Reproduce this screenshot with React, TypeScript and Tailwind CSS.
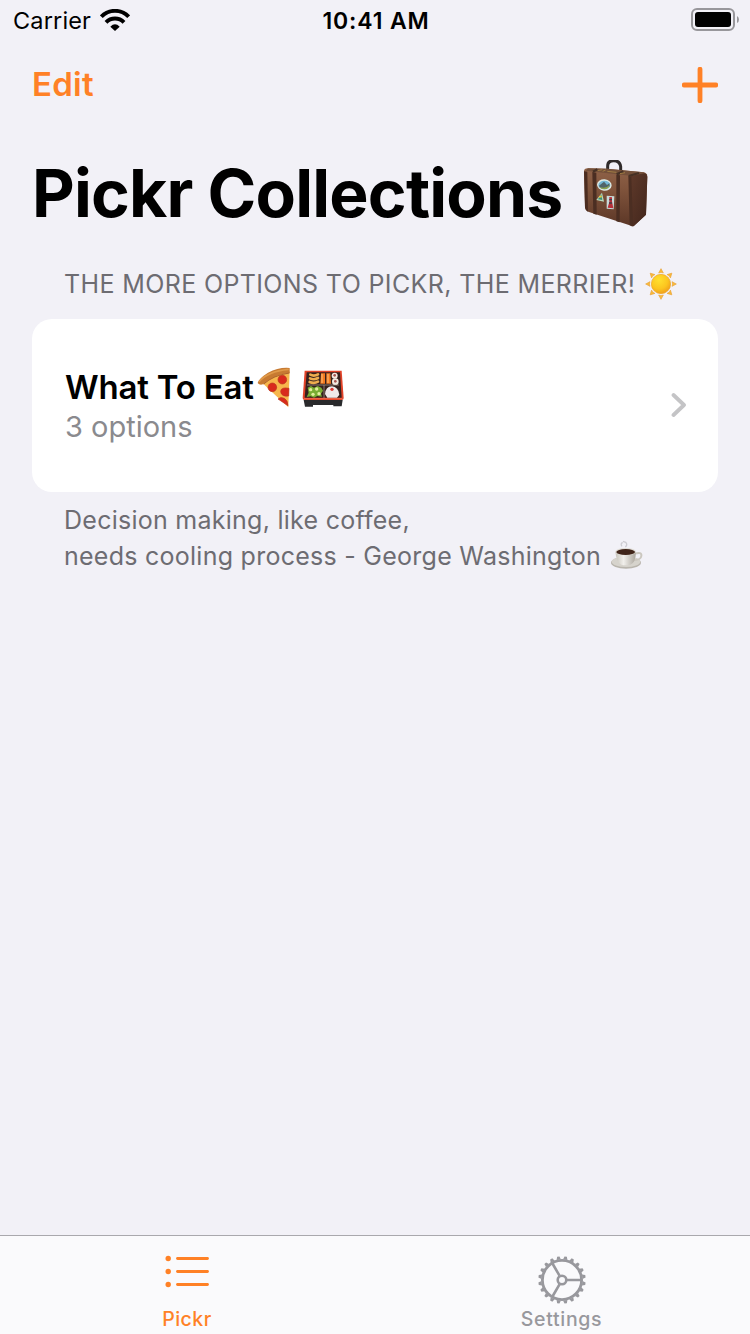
import React from "react";

function WifiIcon() {
  return (
    <svg className="ml-[9px] h-[22px] w-[30px] shrink-0" viewBox="0 0 90 66" fill="none">
      <path d="M4 23A57 57 0 0 1 86 23" stroke="#000" strokeWidth="12" />
      <path d="M18 40A38 38 0 0 1 72 40" stroke="#000" strokeWidth="12" />
      <path d="M31 53Q45 39 59 53L45 66Z" fill="#000" />
    </svg>
  );
}

function BatteryIcon() {
  return (
    <svg className="h-[24px] w-[48px]" viewBox="0 0 48 24" fill="none">
      <rect x="1" y="1" width="42" height="21" rx="5" stroke="#98979b" strokeWidth="2" />
      <rect x="4" y="4" width="36" height="15" rx="3" fill="#000" />
      <path d="M46 8Q48 9 48 11.5T46 15Z" fill="#98979b" />
    </svg>
  );
}

function SuitcaseEmoji() {
  return (
    <svg className="h-[68px] w-[66px] shrink-0" viewBox="40 42 198 204">
      <defs>
        <linearGradient id="leather" x1="0" y1="0" x2="0" y2="1">
          <stop offset="0" stopColor="#8f6248" />
          <stop offset="0.35" stopColor="#80543c" />
          <stop offset="1" stopColor="#5b3626" />
        </linearGradient>
        <linearGradient id="leatherSide" x1="0" y1="0" x2="1" y2="1">
          <stop offset="0" stopColor="#5e392a" />
          <stop offset="1" stopColor="#42261c" />
        </linearGradient>
      </defs>
      <path d="M114 72V60Q114 44 132 44Q151 44 153 62V80" fill="none" stroke="#302b2b" strokeWidth="9" />
      <path d="M43 76Q43 67 54 67L112 68L222 79Q233 81 233 92L229 206L192 240Q187 243 180 238L58 198Q46 194 46 184Z" fill="url(#leather)" />
      <path d="M55 67L112 68L222 79L233 86L182 89L48 74Z" fill="#74503a" />
      <path d="M182 90L225 82Q233 84 233 92L229 206L192 241Q185 240 185 231Z" fill="url(#leatherSide)" />
      <path d="M43 76L53 77L55 197Q47 193 46 184Z" fill="#4b2c20" />
      <path d="M68 78L80 80L81 206L71 203ZM140 86L151 88L150 229L140 226ZM176 90L185 92L190 240L180 238Z" fill="#4b2e22" />
      <path d="M70 77L83 70M141 85L161 76M177 90L208 81" stroke="#463125" strokeWidth="7" />
      <path d="M84 74L98 71M151 83L166 80M99 76L108 72M113 76L140 79" stroke="#a07c43" strokeWidth="3" />
      <ellipse cx="104" cy="117" rx="22" ry="17" fill="#dfeae5" transform="rotate(5 104 117)" />
      <ellipse cx="104" cy="117" rx="18" ry="13" fill="#76b8d6" />
      <path d="M88 119L103 107L112 117L119 112L120 121Q106 133 90 124Z" fill="#50646a" />
      <path d="M90 123Q107 130 120 117Q118 129 104 130Q94 130 90 123Z" fill="#8fa44f" />
      <path d="M97 140L103 167L80 162Z" fill="#b9dcc0" />
      <path d="M95 145L98 162L85 160Z" fill="#3c8d75" />
      <path d="M88 153L96 151" stroke="#e8c63f" strokeWidth="5" />
      <path d="M111 149L134 151L132 190L111 188Z" fill="#c8dbda" />
      <path d="M119 153L127 154L127 166L131 187L114 185L119 168Z" fill="#b8303a" />
      <path d="M119 161H127M118 171H127" stroke="#453b44" strokeWidth="4" />
    </svg>
  );
}

function SunEmoji() {
  return (
    <svg className="h-[32px] w-[32px] shrink-0" viewBox="-48 -48 96 96">
      <defs>
        <radialGradient id="sunDisc" cx="0.4" cy="0.3" r="0.75">
          <stop offset="0" stopColor="#ffe02f" />
          <stop offset="0.6" stopColor="#fcc51f" />
          <stop offset="1" stopColor="#ee9a1a" />
        </radialGradient>
      </defs>
      {[0, 45, 90, 135, 180, 225, 270, 315].map((angle) => (
        <path key={angle} d="M0 -46L7 -33Q0 -37 -7 -33Z" transform={`rotate(${angle})`} fill="#fbbb35" stroke="#e9a33b" strokeWidth="2" />
      ))}
      <circle r="29" fill="url(#sunDisc)" stroke="#eda522" strokeWidth="2" />
    </svg>
  );
}

function PizzaEmoji() {
  return (
    <svg className="h-[42px] w-[34px] shrink-0" viewBox="33 36 102 126">
      <path d="M49 84Q75 57 131 49L127 157Z" fill="#f7b64c" />
      <path d="M35 84Q39 70 66 53Q99 36 131 39V54Q86 57 51 88Q40 91 35 84Z" fill="#c77a32" />
      <path d="M39 80Q65 49 128 43" stroke="#e09a49" strokeWidth="5" fill="none" />
      <path d="M53 87Q82 61 130 54" stroke="#a9602c" strokeWidth="3" fill="none" />
      <g fill="#d92a1d" stroke="#b9391e" strokeWidth="2">
        <circle cx="109" cy="74" r="13" />
        <circle cx="79" cy="97" r="13" />
        <path d="M129 100Q104 95 104 110Q106 126 128 123Z" />
        <path d="M96 132Q103 124 115 130Q126 137 126 152Z" />
      </g>
    </svg>
  );
}

function BentoEmoji() {
  return (
    <svg className="h-[38px] w-[42px] shrink-0" viewBox="169 46 126 114">
      <path d="M174 136H291L288 155H263V151H202V156H178Z" fill="#292a2c" />
      <path d="M177 48H288L294 130Q294 136 288 136H177Q171 136 171 130Z" fill="#e24329" />
      <path d="M183 53H283L288 129H177Z" fill="#35211e" />
      <g stroke="#edac4e" strokeWidth="8" strokeLinecap="round" fill="none">
        <path d="M194 60Q205 66 217 59M193 71Q205 77 217 70M192 82Q205 88 217 81" />
      </g>
      <path d="M226 56H238V87H224ZM242 56H254L256 87H242Z" fill="#f47a20" />
      <path d="M229 58V85M247 58V85" stroke="#ffc078" strokeWidth="3" />
      <g fill="#f4e9df">
        <circle cx="267" cy="63" r="9" />
        <circle cx="269" cy="81" r="10" />
      </g>
      <circle cx="267" cy="62" r="4" fill="#a65450" />
      <circle cx="269" cy="80" r="4" fill="#a65450" />
      <path d="M184 91H280M235 91V130" stroke="#b5a598" strokeWidth="2" />
      <path d="M186 99L196 94L205 99L216 94L227 99L232 108L226 117L229 126L215 124L205 129L195 125L183 127L189 114Z" fill="#79ad32" />
      <g fill="#e2ee9c">
        <circle cx="195" cy="105" r="5" />
        <circle cx="213" cy="103" r="5" />
        <circle cx="202" cy="119" r="5" />
        <circle cx="220" cy="117" r="5" />
      </g>
      <path d="M238 118Q240 96 259 95Q278 97 281 120L274 129H245Z" fill="#f0e9e9" />
      <circle cx="259" cy="104" r="5" fill="#df3932" />
      <path d="M175 132H290" stroke="#f0694a" strokeWidth="3" />
    </svg>
  );
}

function CoffeeEmoji() {
  return (
    <svg className="h-[30px] w-[33px] shrink-0" viewBox="34 28 99 90">
      <defs>
        <linearGradient id="cup" x1="0" y1="0" x2="1" y2="0">
          <stop offset="0" stopColor="#c7c4bb" />
          <stop offset="0.4" stopColor="#f1efeb" />
          <stop offset="1" stopColor="#aaa59c" />
        </linearGradient>
      </defs>
      <path d="M70 47Q64 40 72 35M80 49Q88 42 81 35L73 32" stroke="#cdccd2" strokeWidth="4" fill="none" />
      <ellipse cx="82" cy="96" rx="45" ry="18" fill="#b9b5ad" />
      <ellipse cx="82" cy="93" rx="43" ry="16" fill="#d6d3cc" />
      <path d="M108 69Q130 62 128 76Q127 88 103 89" stroke="#cbc7bf" strokeWidth="6" fill="none" />
      <path d="M50 63H112Q111 96 95 102Q82 106 68 102Q53 94 50 63Z" fill="url(#cup)" />
      <ellipse cx="81" cy="63" rx="31" ry="11" fill="#e0ddd7" />
      <ellipse cx="81" cy="64" rx="28" ry="9" fill="#402419" />
    </svg>
  );
}

function ListIcon() {
  return (
    <svg className="h-[34px] w-[46px]" viewBox="0 0 46 34">
      {[4.5, 17.5, 30.5].map((y) => (
        <g key={y}>
          <circle cx="4.2" cy={y} r="2.7" fill="#ff8126" />
          <path d={`M13.5 ${y}H43.5`} stroke="#ff8126" strokeWidth="2.8" strokeLinecap="round" />
        </g>
      ))}
    </svg>
  );
}

function GearIcon() {
  const teeth = Array.from({ length: 20 }, (_, i) => i * 18 + 9);
  return (
    <svg className="h-[48px] w-[48px]" viewBox="-24 -24 48 48" fill="none" stroke="#98989d">
      {teeth.map((angle) => (
        <path key={angle} d="M-2.2 -20.5L-1.2 -23.7H1.2L2.2 -20.5Z" transform={`rotate(${angle})`} fill="#98989d" stroke="none" />
      ))}
      <circle r="19.6" strokeWidth="2.8" />
      <circle r="4.3" strokeWidth="2.6" />
      <path d="M5 0H19M-2.5 -4.3L-9.8 -17M-2.5 4.3L-9.8 17" strokeWidth="2.6" />
    </svg>
  );
}

export default function App() {
  return (
    <div className="flex h-[1334px] w-[750px] flex-col overflow-hidden bg-[#f2f1f7] font-['Inter',sans-serif] whitespace-nowrap text-black">
      <header className="grid h-[40px] grid-cols-[1fr_auto_1fr] items-center pr-[11px] pl-[13px]">
        <div className="flex items-center">
          <span className="pt-[2px] text-[23.5px] tracking-[0.15px]">Carrier</span>
          <WifiIcon />
        </div>
        <span className="pt-[2px] text-[23px] font-semibold tracking-[0.85px]">10:41 AM</span>
        <div className="flex justify-end">
          <BatteryIcon />
        </div>
      </header>

      <nav className="flex h-[88px] items-center justify-between px-[32px] pt-[2px] text-[#ff8126]">
        <button className="text-[33px] font-semibold tracking-[0.25px]">Edit</button>
        <button aria-label="Add collection">
          <svg className="h-[36px] w-[36px]" viewBox="0 0 36 36">
            <path d="M18 2.2V33.8M2.2 18H33.8" stroke="#ff8126" strokeWidth="4.8" strokeLinecap="round" />
          </svg>
        </button>
      </nav>

      <div className="flex h-[131px] items-center gap-[21px] pl-[32px]">
        <h1 className="text-[66px] font-bold tracking-[-0.8px]">Pickr Collections</h1>
        <SuitcaseEmoji />
      </div>

      <main className="flex flex-1 flex-col px-[32px]">
        <div className="flex h-[51px] items-center gap-[9.5px] pl-[32px] text-[25px] text-[#6d6c72]">
          <h2 className="tracking-[0.37px]">THE MORE OPTIONS TO PICKR, THE MERRIER!</h2>
          <span className="pb-[1px]"><SunEmoji /></span>
        </div>
        <section className="mt-[9px] flex h-[173px] w-[686px] items-center justify-between rounded-[20px] bg-white pr-[31px] pl-[33px]">
          <div className="pt-[2px]">
            <div className="flex h-[40px] items-center pt-[2px]">
              <span className="w-[191.5px] text-[33px] font-semibold tracking-[-0.2px]">What To Eat</span>
              <span className="pt-[1px]"><PizzaEmoji /></span>
              <span className="w-[11px]" />
              <span className="pt-[3px]"><BentoEmoji /></span>
            </div>
            <div className="flex h-[40px] items-center text-[29px] text-[#8a8a8e]">3 options</div>
          </div>
          <svg className="mb-[2px] h-[26px] w-[16px]" viewBox="0 0 16 26">
            <path d="M2.5 3L13 13L2.5 23" fill="none" stroke="#c4c4c6" strokeWidth="3.8" strokeLinecap="round" strokeLinejoin="round" />
          </svg>
        </section>
        <div className="mt-[11px] pl-[32px] text-[25px] tracking-[0.26px] text-[#6d6c72]">
          <p className="flex h-[36px] items-center">Decision making, like coffee,</p>
          <p className="flex h-[36px] items-center gap-[9px]">
            <span>needs cooling process - George Washington</span>
            <span className="pb-[4px]"><CoffeeEmoji /></span>
          </p>
        </div>
      </main>

      <footer className="grid h-[99px] grid-cols-2 border-t border-[#a9a8ad] bg-[#fafafc] text-[19.5px] font-medium">
        <button className="flex flex-col items-center pr-[1px] text-[#ff8126]">
          <span className="flex h-[71px] items-center pb-[1px]"><ListIcon /></span>
          <span className="leading-[24px] tracking-[0.5px]">Pickr</span>
        </button>
        <button className="flex flex-col items-center pr-[2px] text-[#98989d]">
          <span className="flex h-[71px] items-end pb-[3px]"><GearIcon /></span>
          <span className="leading-[24px] tracking-[0.7px]">Settings</span>
        </button>
      </footer>
    </div>
  );
}
